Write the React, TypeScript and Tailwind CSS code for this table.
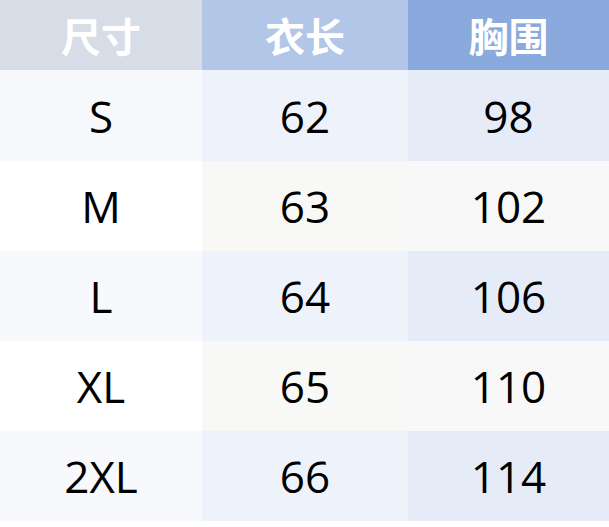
const rows = [
  ["S", "62", "98"],
  ["M", "63", "102"],
  ["L", "64", "106"],
  ["XL", "65", "110"],
  ["2XL", "66", "114"],
];

const oddBg = ["bg-[#f7f9fc]", "bg-[#eef2fa]", "bg-[#e6ecf7]"];
const evenBg = ["bg-white", "bg-[#f8f8f7]", "bg-[#f9f8f8]"];

export default function App() {
  return (
    <div className="w-[609px] h-[527px] bg-white">
      <div className="grid grid-cols-[202px_206px_201px]">
        <div className="h-[70px] flex items-center justify-center bg-[#d6dde7] text-white font-bold text-[40px] leading-none [font-family:'Noto_Sans_CJK_SC',sans-serif]">
          尺寸
        </div>
        <div className="h-[70px] flex items-center justify-center bg-[#b2c6e7] text-white font-bold text-[40px] leading-none [font-family:'Noto_Sans_CJK_SC',sans-serif]">
          衣长
        </div>
        <div className="h-[70px] flex items-center justify-center bg-[#8aa9dc] text-white font-bold text-[40px] leading-none [font-family:'Noto_Sans_CJK_SC',sans-serif]">
          胸围
        </div>
        {rows.map((row, i) =>
          row.map((cell, j) => (
            <div
              key={`${i}-${j}`}
              className={`${i === 0 ? "h-[91px]" : "h-[90px]"} flex items-center justify-center text-[44px] text-black [font-family:'Open_Sans',sans-serif] ${
                i % 2 === 0 ? oddBg[j] : evenBg[j]
              }`}
            >
              {cell}
            </div>
          ))
        )}
      </div>
    </div>
  );
}
